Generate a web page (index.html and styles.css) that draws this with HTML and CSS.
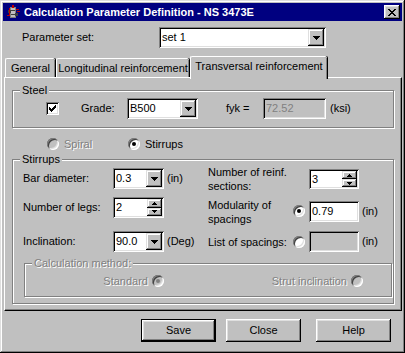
FILE: index.html
```html
<!DOCTYPE html>
<html lang="en">
<head>
  <meta charset="UTF-8" />
  <title>Calculation Parameter Definition - NS 3473E</title>
  <link rel="stylesheet" href="styles.css">
</head>
<body>

<div class="window">

  <!-- Title bar -->
  <div class="titlebar">
    <svg class="app-icon" width="16" height="16" viewBox="0 0 16 16" shape-rendering="crispEdges">
      <rect x="5" y="3" width="6" height="11" fill="#808080"/>
      <rect x="6" y="4" width="4" height="9" fill="#c0c0c0"/>
      <rect x="3" y="6" width="3" height="3" fill="#404040"/>
      <rect x="10" y="9" width="3" height="3" fill="#404040"/>
      <rect x="7" y="1" width="2" height="3" fill="#c00000"/>
      <rect x="4" y="4" width="1" height="8" fill="#c00000"/>
      <rect x="11" y="5" width="3" height="1" fill="#c00000"/>
      <rect x="12" y="7" width="3" height="1" fill="#c00000"/>
      <rect x="2" y="11" width="3" height="1" fill="#c00000"/>
      <rect x="6" y="6" width="4" height="1" fill="#404040"/>
      <rect x="6" y="10" width="4" height="1" fill="#404040"/>
    </svg>
    <span class="title">Calculation Parameter Definition - NS 3473E</span>
    <span class="close-btn">
      <svg width="8" height="7" viewBox="0 0 8 7" shape-rendering="crispEdges">
        <path d="M0 0h2v1h-2zM6 0h2v1h-2zM1 1h2v1h-2zM5 1h2v1h-2zM2 2h4v1h-4zM3 3h2v1h-2zM2 4h4v1h-4zM1 5h2v1h-2zM5 5h2v1h-2zM0 6h2v1h-2zM6 6h2v1h-2z" fill="#000"/>
      </svg>
    </span>
  </div>

  <!-- Parameter set -->
  <div class="param-row">
    <span class="param-label">Parameter set:</span>
    <div class="combo combo-set">
      <span class="combo-text">set 1</span>
      <span class="drop"><svg width="7" height="4" viewBox="0 0 7 4" shape-rendering="crispEdges"><path d="M0 0h7v1h-7zM1 1h5v1h-5zM2 2h3v1h-3zM3 3h1v1h-1z"/></svg></span>
    </div>
  </div>

  <!-- Tabs -->
  <div class="tabs">
    <div class="tab tab-general">General</div>
    <div class="tab tab-long">Longitudinal reinforcement</div>
    <div class="tab tab-active">Transversal reinforcement</div>
  </div>

  <div class="panel">

    <!-- Steel -->
    <div class="group group-steel">
      <span class="group-label">Steel</span>
      <div class="steel-row">
        <span class="checkbox">
          <svg width="7" height="7" viewBox="0 0 7 7" shape-rendering="crispEdges"><path d="M6 0h1v3h-1zM5 1h1v3h-1zM4 2h1v3h-1zM3 3h1v3h-1zM2 4h1v3h-1zM1 3h1v3h-1zM0 2h1v3h-1z"/></svg>
        </span>
        <span class="grade-label">Grade:</span>
        <div class="combo combo-grade">
          <span class="combo-text">B500</span>
          <span class="drop"><svg width="7" height="4" viewBox="0 0 7 4" shape-rendering="crispEdges"><path d="M0 0h7v1h-7zM1 1h5v1h-5zM2 2h3v1h-3zM3 3h1v1h-1z"/></svg></span>
        </div>
        <span class="fyk-label">fyk =</span>
        <div class="textbox textbox-fyk is-disabled">72.52</div>
        <span class="unit">(ksi)</span>
      </div>
    </div>

    <!-- Spiral / Stirrups -->
    <div class="type-row">
      <span class="radio radio-off"></span>
      <span class="radio-text spiral-text text-disabled">Spiral</span>
      <span class="radio checked"></span>
      <span class="radio-text">Stirrups</span>
    </div>

    <!-- Stirrups -->
    <div class="group group-stirrups">
      <span class="group-label">Stirrups</span>
      <div class="stirrup-cols">

        <div class="col-left">
          <div class="field">
            <span class="field-label">Bar diameter:</span>
            <div class="combo combo-small">
              <span class="combo-text">0.3</span>
              <span class="drop"><svg width="7" height="4" viewBox="0 0 7 4" shape-rendering="crispEdges"><path d="M0 0h7v1h-7zM1 1h5v1h-5zM2 2h3v1h-3zM3 3h1v1h-1z"/></svg></span>
            </div>
            <span class="unit">(in)</span>
          </div>
          <div class="field field-legs">
            <span class="field-label">Number of legs:</span>
            <div class="spin">
              <span class="combo-text">2</span>
              <span class="spin-btns">
                <span class="spin-btn"><svg width="5" height="3" viewBox="0 0 5 3" shape-rendering="crispEdges"><path d="M2 0h1v1h-1zM1 1h3v1h-3zM0 2h5v1h-5z"/></svg></span>
                <span class="spin-btn"><svg width="5" height="3" viewBox="0 0 5 3" shape-rendering="crispEdges"><path d="M0 0h5v1h-5zM1 1h3v1h-3zM2 2h1v1h-1z"/></svg></span>
              </span>
            </div>
          </div>
          <div class="field field-incl">
            <span class="field-label">Inclination:</span>
            <div class="combo combo-small">
              <span class="combo-text">90.0</span>
              <span class="drop"><svg width="7" height="4" viewBox="0 0 7 4" shape-rendering="crispEdges"><path d="M0 0h7v1h-7zM1 1h5v1h-5zM2 2h3v1h-3zM3 3h1v1h-1z"/></svg></span>
            </div>
            <span class="unit">(Deg)</span>
          </div>
        </div>

        <div class="col-right">
          <div class="field field-tall">
            <span class="field-label-r">Number of reinf.<br>sections:</span>
            <span class="radio-slot"></span>
            <div class="spin">
              <span class="combo-text">3</span>
              <span class="spin-btns">
                <span class="spin-btn"><svg width="5" height="3" viewBox="0 0 5 3" shape-rendering="crispEdges"><path d="M2 0h1v1h-1zM1 1h3v1h-3zM0 2h5v1h-5z"/></svg></span>
                <span class="spin-btn"><svg width="5" height="3" viewBox="0 0 5 3" shape-rendering="crispEdges"><path d="M0 0h5v1h-5zM1 1h3v1h-3zM2 2h1v1h-1z"/></svg></span>
              </span>
            </div>
          </div>
          <div class="field field-tall field-mod">
            <span class="field-label-r">Modularity of<br>spacings</span>
            <span class="radio-slot"><span class="radio checked"></span></span>
            <div class="textbox">0.79</div>
            <span class="unit">(in)</span>
          </div>
          <div class="field field-list">
            <span class="field-label-r">List of spacings:</span>
            <span class="radio-slot"><span class="radio"></span></span>
            <div class="textbox is-disabled"></div>
            <span class="unit">(in)</span>
          </div>
        </div>

      </div>

      <!-- Calculation method -->
      <div class="group group-calc">
        <span class="group-label text-disabled">Calculation method:</span>
        <div class="calc-row">
          <span class="calc-text calc-standard text-disabled">Standard</span>
          <span class="radio radio-off checked-off"></span>
          <span class="calc-text calc-strut text-disabled">Strut inclination</span>
          <span class="radio radio-off"></span>
        </div>
      </div>
    </div>

  </div>

  <!-- Dialog buttons -->
  <div class="buttons">
    <div class="btn btn-default">Save</div>
    <div class="btn btn-close">Close</div>
    <div class="btn btn-help">Help</div>
  </div>

</div>

</body>
</html>
```

FILE: styles.css
```css
* {
  box-sizing: border-box;
}

body {
  margin: 0;
  font-family: 'Liberation Sans', Arial, sans-serif;
  font-size: 11px;
  line-height: 13px;
  color: #000;
  background: #c0c0c0;
}

.window {
  width: 405px;
  height: 353px;
  padding: 3px;
  background: #c0c0c0;
  box-shadow: inset -1px -1px #000, inset 1px 1px #dfdfdf,
              inset -2px -2px #808080, inset 2px 2px #fff;
}

/* Title bar */
.titlebar {
  height: 18px;
  background: #000080;
  display: flex;
  align-items: center;
  padding-left: 2px;
}

.app-icon {
  flex: none;
}

.title {
  flex: 1;
  margin-left: 3px;
  color: #fff;
  font-weight: bold;
  font-size: 11px;
}

.close-btn {
  width: 16px;
  height: 14px;
  margin-right: 2px;
  display: flex;
  align-items: center;
  justify-content: center;
  padding-right: 1px;
  background: #c0c0c0;
  box-shadow: inset -1px -1px #000, inset 1px 1px #fff, inset -2px -2px #808080, inset 2px 2px #dfdfdf;
}

/* Shared controls */
.combo, .spin, .textbox {
  height: 21px;
  padding: 2px;
  display: flex;
  align-items: stretch;
  background: #fff;
  box-shadow: inset 1px 1px #808080, inset -1px -1px #fff,
              inset 2px 2px #000, inset -2px -2px #dfdfdf;
}

.combo-text {
  flex: 1;
  padding-left: 1px;
  line-height: 17px;
}

.drop, .spin-btn {
  display: flex;
  align-items: center;
  justify-content: center;
  background: #c0c0c0;
  box-shadow: inset -1px -1px #000, inset 1px 1px #dfdfdf,
              inset -2px -2px #808080, inset 2px 2px #fff;
}

.drop {
  width: 16px;
}

.spin-btns {
  width: 15px;
  display: flex;
  flex-direction: column;
}

.spin-btn {
  flex: 1;
}

.textbox {
  width: 50px;
  padding-left: 3px;
  line-height: 17px;
}

.is-disabled {
  background: #c0c0c0;
  color: #808080;
}

.text-disabled {
  color: #808080;
  text-shadow: 1px 1px #fff;
}

.unit {
  margin-left: 3px;
}

.radio {
  width: 12px;
  height: 12px;
  flex: none;
  border-radius: 50%;
  background: #fff;
  position: relative;
  box-shadow: inset 1px 1px #808080, inset -1px -1px #fff,
              inset 2px 2px #404040, inset -2px -2px #dfdfdf;
}

.radio.checked::after {
  content: '';
  position: absolute;
  left: 4px;
  top: 4px;
  width: 4px;
  height: 4px;
  border-radius: 50%;
  background: #000;
}

.radio-off {
  background: #c0c0c0;
}

.radio.checked-off::after {
  content: '';
  position: absolute;
  left: 4px;
  top: 4px;
  width: 4px;
  height: 4px;
  border-radius: 50%;
  background: #808080;
}

.checkbox {
  width: 13px;
  height: 13px;
  flex: none;
  display: flex;
  align-items: center;
  justify-content: center;
  background: #fff;
  box-shadow: inset 1px 1px #808080, inset -1px -1px #fff,
              inset 2px 2px #000, inset -2px -2px #dfdfdf;
}

/* Parameter set */
.param-row {
  margin-top: 6px;
  height: 21px;
  padding-left: 19px;
  display: flex;
  align-items: center;
}

.param-label {
  width: 137px;
}

.combo-set {
  width: 167px;
}

/* Tabs */
.tabs {
  margin-top: 8px;
  height: 21px;
  padding-left: 2px;
  display: flex;
  align-items: flex-end;
}

.tab {
  height: 19px;
  padding: 3px 0 0 0;
  text-align: center;
  background: #c0c0c0;
  border-top: 1px solid #fff;
  border-left: 1px solid #fff;
  border-top-left-radius: 2px;
  border-top-right-radius: 2px;
  box-shadow: inset -1px 0 #808080, 1px 0 #000;
}

.tab-general { width: 50px; }
.tab-long    { width: 133px; margin-left: 1px; }

.tab-active {
  width: 137px;
  height: 23px;
  margin-bottom: -2px;
  margin-left: 1px;
  padding-top: 3px;
  position: relative;
  z-index: 1;
}

/* Panel */
.panel {
  margin-left: 1px;
  width: 398px;
  height: 234px;
  border-top: 1px solid #fff;
  border-left: 1px solid #fff;
  border-right: 1px solid #000;
  border-bottom: 1px solid #000;
  box-shadow: inset -1px -1px #808080;
}

.group {
  position: relative;
  border: 1px solid #808080;
  box-shadow: inset 1px 1px #fff, 1px 1px #fff;
}

.group-label {
  position: absolute;
  top: -7px;
  left: 7px;
  padding: 0 2px;
  background: #c0c0c0;
}

.group-steel {
  margin: 12px 0 0 7px;
  width: 382px;
  height: 38px;
}

.steel-row {
  padding: 7px 0 0 33px;
  display: flex;
  align-items: center;
}

.grade-label {
  margin-left: 22px;
  width: 46px;
}

.combo-grade {
  width: 71px;
}

.fyk-label {
  margin-left: 28px;
  width: 37px;
}

.textbox-fyk {
  width: 63px;
}

.unit + .unit {
  margin-left: 0;
}

.steel-row .unit {
  margin-left: 4px;
}

/* Spiral / Stirrups */
.type-row {
  margin-top: 10px;
  height: 12px;
  padding-left: 42px;
  display: flex;
  align-items: center;
}

.radio-text {
  margin-left: 5px;
}

.spiral-text {
  width: 64px;
}

/* Stirrups */
.group-stirrups {
  margin: 9px 0 0 7px;
  width: 382px;
  height: 145px;
}

.stirrup-cols {
  display: flex;
  align-items: flex-start;
}

.col-left {
  margin: 8px 0 0 10px;
  width: 185px;
}

.col-right {
  margin-top: 5px;
}

.field {
  height: 21px;
  display: flex;
  align-items: center;
}

.field-label {
  width: 90px;
}

.combo-small, .spin {
  width: 51px;
}

.field-legs { margin-top: 8px; }
.field-incl { margin-top: 13px; }

.field-tall {
  height: 28px;
}

.field-mod  { margin-top: 4px; }
.field-list { margin-top: 6px; }

.field-label-r {
  width: 85px;
  line-height: 14px;
}

.field-mod .field-label-r {
  padding-top: 2px;
}

.radio-slot {
  width: 16px;
  display: flex;
}

.col-right .spin {
  width: 50px;
  height: 20px;
}

/* Calculation method */
.group-calc {
  margin: 11px 0 0 11px;
  width: 368px;
  height: 34px;
}

.calc-row {
  padding-top: 11px;
  height: 23px;
  display: flex;
  align-items: center;
}

.calc-text {
  text-align: right;
  margin-right: 4px;
}

.calc-standard { width: 123px; }
.calc-strut    { width: 183px; }

/* Buttons */
.buttons {
  margin-top: 8px;
  padding-left: 138px;
  display: flex;
}

.btn {
  width: 75px;
  height: 23px;
  line-height: 23px;
  text-align: center;
  background: #c0c0c0;
  box-shadow: inset -1px -1px #000, inset 1px 1px #fff,
              inset -2px -2px #808080, inset 2px 2px #dfdfdf;
}

.btn-default {
  box-shadow: inset 0 0 0 1px #000, inset -2px -2px #000, inset 2px 2px #fff,
              inset -3px -3px #808080, inset 3px 3px #dfdfdf;
}

.btn-close { margin-left: 10px; }
.btn-help  { margin-left: 15px; }
```
